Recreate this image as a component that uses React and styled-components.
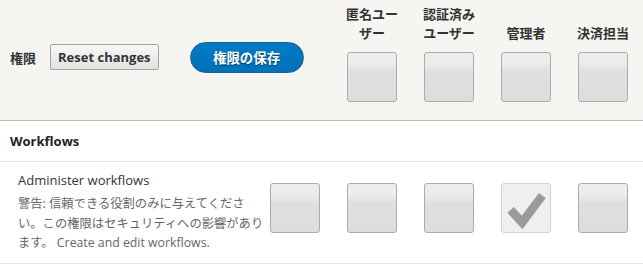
import React from "react";
import styled, { createGlobalStyle } from "styled-components";

const Global = createGlobalStyle`
  html, body { margin: 0; padding: 0; background: #fff; }
  body {
    font-family: "Open Sans", "Noto Sans CJK JP", sans-serif;
    color: #333;
    -webkit-font-smoothing: antialiased;
  }
`;

const COLS = "266px 77px 77px 77px 77px 1fr";

const Table = styled.div`
  width: 643px;
`;

const HeadRow = styled.div`
  display: grid;
  grid-template-columns: ${COLS};
  height: 120px;
  background: #f5f5f2;
  border-bottom: 1px solid #bfbfba;
`;

const HeadMain = styled.div`
  grid-column: 1 / span 2;
  display: flex;
  align-items: center;
  padding: 0 0 6px 10px;
`;

const HeadLabel = styled.span`
  font-size: 13px;
  font-weight: 700;
  color: #333;
  margin-right: 14px;
`;

const ResetButton = styled.button`
  font-family: "Open Sans", "Noto Sans CJK JP", sans-serif;
  font-size: 13px;
  font-weight: 700;
  color: #333;
  height: 26px;
  padding: 0 7px;
  border: 1px solid #a3a3a3;
  border-radius: 2px;
  background: linear-gradient(#f7f7f7, #e2e2e2);
  margin-right: 31px;
  cursor: pointer;
`;

const SaveButton = styled.button`
  font-family: "Open Sans", "Noto Sans CJK JP", sans-serif;
  font-size: 13.4px;
  font-weight: 700;
  color: #fff;
  text-shadow: 0 1px 1px rgba(0, 0, 0, 0.5);
  width: 114px;
  height: 31px;
  border: 1px solid #1e5c90;
  border-radius: 16px;
  background: linear-gradient(#007bc6, #0071b8);
  cursor: pointer;
`;

const RoleHead = styled.div`
  display: flex;
  flex-direction: column;
  padding: 5px 0 0 4px;
`;

const RoleLabel = styled.div`
  width: 50px;
  height: 38px;
  display: flex;
  flex-direction: column;
  justify-content: flex-end;
  align-items: center;
  font-size: 13px;
  font-weight: 700;
  line-height: 19px;
  color: #333;
  white-space: nowrap;
  margin-bottom: 9px;
`;

const GroupRow = styled.div`
  height: 40px;
  display: flex;
  align-items: center;
  padding-left: 10px;
  border-bottom: 1px solid #e6e4df;
  font-size: 13px;
  font-weight: 700;
  color: #222;
`;

const PermRow = styled.div`
  display: grid;
  grid-template-columns: ${COLS};
  border-bottom: 1px solid #e6e4df;
  height: 102px;
  box-sizing: border-box;
`;

const PermText = styled.div`
  padding: 9px 0 0 18px;
`;

const PermTitle = styled.div`
  font-size: 13px;
  line-height: 19px;
  color: #333;
`;

const PermDesc = styled.div`
  margin-top: 4px;
  font-size: 12.3px;
  line-height: 19.5px;
  color: #666;
  width: 248px;
`;

const BoxCell = styled.div`
  padding: 21px 0 0 4px;
`;

const Box = styled.div`
  width: 50px;
  height: 50px;
  box-sizing: border-box;
  border-radius: 3px;
  border: 1px solid ${(p) => (p.$checked ? "#d2d2d2" : "#ababab")};
  background: ${(p) =>
    p.$checked
      ? "#efefef"
      : "linear-gradient(#ededed 0%, #ececec 22%, #dfdfdf 40%, #dddddd 100%)"};
  display: flex;
  align-items: center;
  justify-content: center;
`;

const Check = () => (
  <svg width="50" height="50" viewBox="0 0 50 50">
    <polyline
      points="9,27 21,40 42,12"
      fill="none"
      stroke="#9b9b9b"
      strokeWidth="9"
      strokeLinejoin="miter"
    />
  </svg>
);

const Checkbox = ({ checked }) => (
  <Box $checked={checked}>{checked && <Check />}</Box>
);

const roles = [
  ["匿名ユー", "ザー"],
  ["認証済み", "ユーザー"],
  ["管理者"],
  ["決済担当"],
];

export default function App() {
  return (
    <>
      <Global />
      <Table>
        <HeadRow>
          <HeadMain>
            <HeadLabel>権限</HeadLabel>
            <ResetButton>Reset changes</ResetButton>
            <SaveButton>権限の保存</SaveButton>
          </HeadMain>
          {roles.map((lines, i) => (
            <RoleHead key={i}>
              <RoleLabel>
                {lines.map((l) => (
                  <span key={l}>{l}</span>
                ))}
              </RoleLabel>
              <Checkbox />
            </RoleHead>
          ))}
        </HeadRow>
        <GroupRow>Workflows</GroupRow>
        <PermRow>
          <PermText>
            <PermTitle>Administer workflows</PermTitle>
            <PermDesc>
              警告: 信頼できる役割のみに与えてください。この権限はセキュリティへの影響があります。 Create and edit workflows.
            </PermDesc>
          </PermText>
          {[false, false, false, true, false].map((c, i) => (
            <BoxCell key={i}>
              <Checkbox checked={c} />
            </BoxCell>
          ))}
        </PermRow>
      </Table>
    </>
  );
}
